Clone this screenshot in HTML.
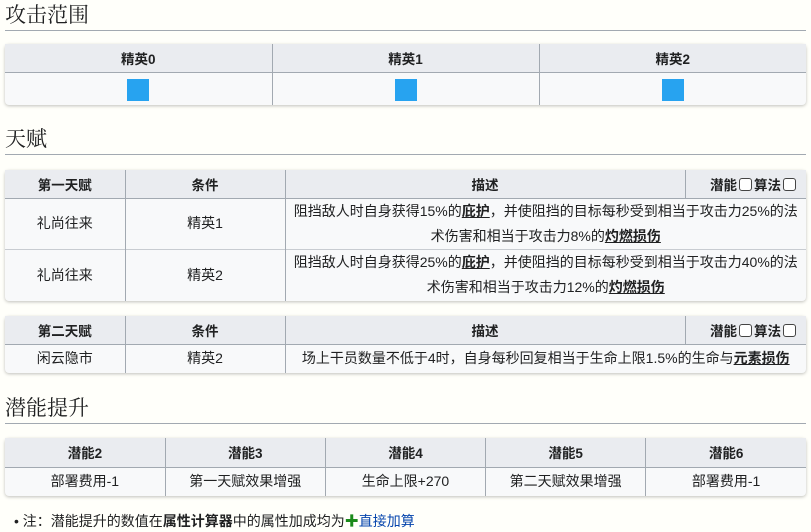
<!DOCTYPE html>
<html><head><meta charset="utf-8"><style>
body{margin:0;background:#fffffa;font-family:"Liberation Sans","Noto Sans CJK SC",sans-serif;font-size:14px;color:#202122;width:811px;height:532px;overflow:hidden;position:relative}
h2{position:absolute;left:5px;width:801px;margin:0;font-family:"Liberation Serif","Noto Serif CJK SC","Noto Sans CJK SC",serif;font-weight:normal;font-size:21px;line-height:24px;border-bottom:1px solid #a2a9b1;padding-bottom:3px}
table{position:absolute;left:5px;width:801px;border-collapse:collapse;background:#f8f9fa;box-shadow:0 1px 3px rgba(0,0,0,.25);border-radius:4px;table-layout:fixed}
th{background:#eaecf0;font-weight:bold;font-size:13.5px;text-align:center;border-left:1px solid #a2a9b1;border-bottom:1px solid #a2a9b1;padding:0}
td{text-align:center;border-left:1px solid #a2a9b1;border-top:1px solid #c8ccd1;padding:0 4px;line-height:25px}
th:first-child,td:first-child{border-left:none}
.sq{display:inline-block;width:22px;height:22px;background:#27a3f0;vertical-align:middle}
u{font-weight:bold;text-decoration:underline}
.cb{display:inline-block;width:11px;height:11px;border:1px solid #444;border-radius:3px;vertical-align:-1px;background:#fff;margin:0 2px}
</style></head><body>
<h2 style="top:3px">攻击范围</h2>
<table style="top:44px"><tr style="height:28px"><th>精英0</th><th>精英1</th><th>精英2</th></tr>
<tr style="height:33px"><td><span class="sq"></span></td><td><span class="sq"></span></td><td><span class="sq"></span></td></tr></table>
<h2 style="top:127px">天赋</h2>
<table style="top:170px"><colgroup><col style="width:120px"><col style="width:160px"><col style="width:400px"><col></colgroup>
<tr style="height:28px"><th>第一天赋</th><th>条件</th><th>描述</th><th style="text-align:right;padding-right:8px">潜能<span class="cb"></span>算法<span class="cb"></span></th></tr>
<tr style="height:51px"><td>礼尚往来</td><td>精英1</td><td colspan="2">阻挡敌人时自身获得15%的<u>庇护</u>，并使阻挡的目标每秒受到相当于攻击力25%的法术伤害和相当于攻击力8%的<u>灼燃损伤</u></td></tr>
<tr style="height:52px"><td>礼尚往来</td><td>精英2</td><td colspan="2">阻挡敌人时自身获得25%的<u>庇护</u>，并使阻挡的目标每秒受到相当于攻击力40%的法术伤害和相当于攻击力12%的<u>灼燃损伤</u></td></tr></table>
<table style="top:316px"><colgroup><col style="width:120px"><col style="width:160px"><col style="width:400px"><col></colgroup>
<tr style="height:28px"><th>第二天赋</th><th>条件</th><th>描述</th><th style="text-align:right;padding-right:8px">潜能<span class="cb"></span>算法<span class="cb"></span></th></tr>
<tr style="height:29px"><td>闲云隐市</td><td>精英2</td><td colspan="2">场上干员数量不低于4时，自身每秒回复相当于生命上限1.5%的生命与<u>元素损伤</u></td></tr></table>
<h2 style="top:396px">潜能提升</h2>
<table style="top:438px"><tr style="height:29px"><th>潜能2</th><th>潜能3</th><th>潜能4</th><th>潜能5</th><th>潜能6</th></tr>
<tr style="height:29px"><td>部署费用-1</td><td>第一天赋效果增强</td><td>生命上限+270</td><td>第二天赋效果增强</td><td>部署费用-1</td></tr></table>
<div style="position:absolute;left:14px;top:512px;line-height:18px">• 注：潜能提升的数值在<b>属性计算器</b>中的属性加成均为<b style="color:#1a8a1a">✚</b><span style="color:#0645ad">直接加算</span></div>
</body></html>
